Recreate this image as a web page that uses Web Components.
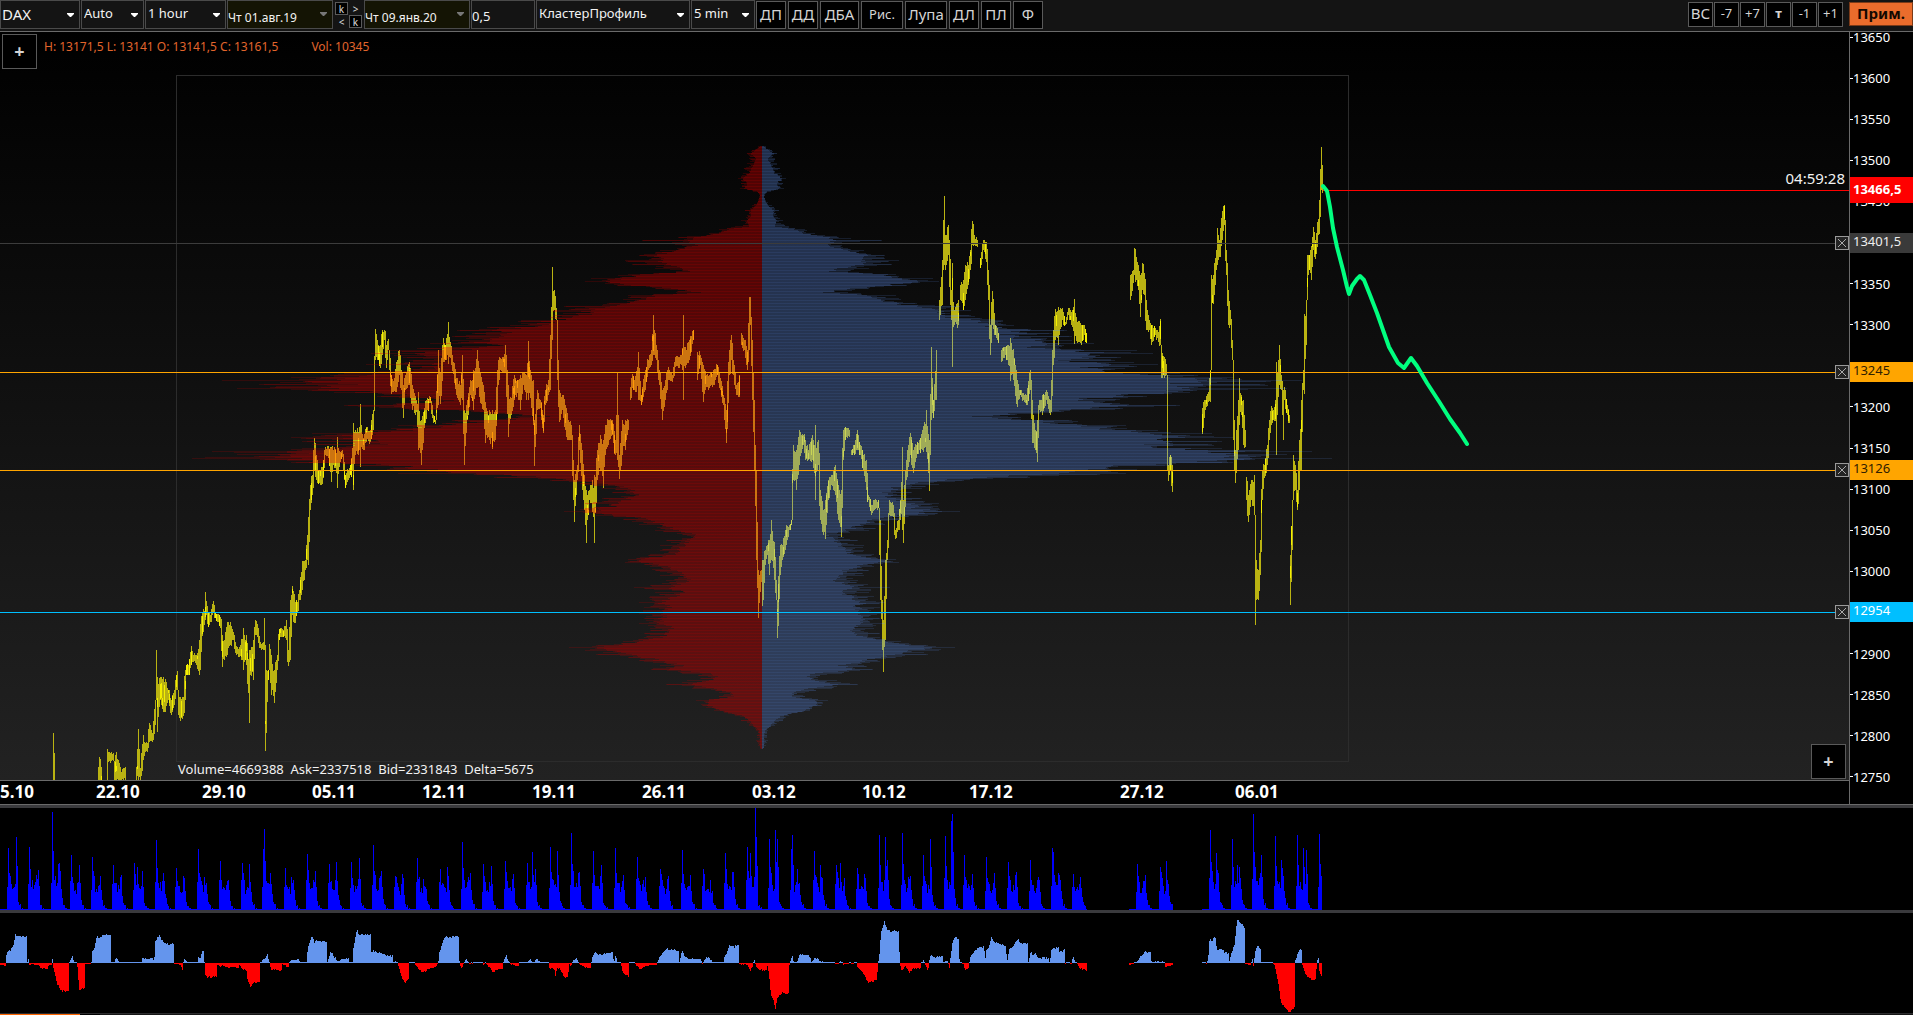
<!DOCTYPE html>
<html lang="ru">
<head>
<meta charset="utf-8">
<title>DAX</title>
<style>
html, body { margin: 0; height: 100%; background: #000; }
body { font-family: "Noto Sans", "Open Sans", sans-serif; color: #f2f2f2; overflow: hidden; }
</style>
</head>
<body>
<trading-app></trading-app>
<script>
/* Deterministic noise so that the series look the same on every load. */
function noise(seed) {
  let s = seed;
  return () => { s = (s * 1664525 + 1013904223) % 4294967296; return s / 4294967296; };
}
const nums = t => t.trim().split(/[\s,]+/).map(Number);
function define(name, html, setup) {
  const tpl = document.createElement('template');
  tpl.innerHTML = html;
  customElements.define(name, class extends HTMLElement {
    constructor() {
      super();
      this.attachShadow({ mode: 'open' }).append(tpl.content.cloneNode(true));
    }
    connectedCallback() { if (setup) setup.call(this, this.shadowRoot); }
  });
}

/* ---------- toolbar parts ---------- */
define('tool-select', `
<style>
:host { display: block; position: relative; width: var(--w); height: 29px; box-sizing: border-box; border: 1px solid #4a4a4a; background: #141414; }
:host([date]) { background: #141404; }
select { appearance: none; display: block; width: 100%; height: 100%; margin: 0; padding: 0 16px 4px 2px; border: 0; background: none; color: #f2f2f2; font: 13px "Noto Sans", sans-serif; outline: 0; }
:host([big]) select { font-size: 15px; padding-left: 1px; padding-bottom: 2px; }
:host([date]) select { font-size: 12px; padding: 5px 14px 0 0; }
svg { position: absolute; right: 5px; top: 12px; width: 7px; height: 5px; fill: #fff; pointer-events: none; }
:host([date]) svg { fill: #777; top: 11px; }
option { background: #141414; }
</style>
<select><option></option></select><svg viewBox="0 0 7 5"><path d="M0 0h7v1L4 4H3L0 1z"/></svg>`,
function (r) {
  r.querySelector('option').textContent = this.getAttribute('value');
  r.querySelector('select').setAttribute('aria-label', this.getAttribute('label'));
});

define('tool-button', `
<style>
:host { display: block; width: var(--w, 30px); height: var(--h, 28px); }
button { display: block; width: 100%; height: 100%; box-sizing: border-box; margin: 0; padding: 0 0 2px; border: 1px solid #5a5a5a; background: #000; color: #d4d4d4; font: var(--weight, 400) var(--size, 15px)/1 "Noto Sans", sans-serif; white-space: nowrap; }
:host([accent]) button { background: #ea6c2c; color: #140800; border-color: #7a3a18; }
:host([tiny]) button { padding: 0; border-color: #5a5a5a; color: #ddd; }
:host([bare]) button { padding: 0; border-color: transparent; background: none; color: #ddd; }
</style>
<button type="button"><slot></slot></button>`);

define('tool-bar', `
<style>
:host { display: flex; justify-content: space-between; height: 31px; background: #141414; border-bottom: 1px solid #6a6a6a; }
.group { display: flex; gap: 1px; align-items: flex-start; }
.buttons { gap: 2px; padding: 1px 0 0; }
.jump { display: grid; grid-template-columns: 13px 13px; grid-auto-rows: 13px; gap: 0 1px; padding: 2px 1px 0; --w: 13px; --h: 13px; --size: 10px; }
input { box-sizing: border-box; width: 64px; height: 29px; margin: 0; padding: 2px 0 0; border: 1px solid #4a4a4a; background: #141414; color: #f2f2f2; font: 13px "Noto Sans", sans-serif; outline: 0; }
.right { gap: 1px; padding-top: 2px; }
.right tool-button { --w: 25px; --h: 25px; --size: 13px; }
.right tool-button[accent] { --w: 64px; --h: 24px; --size: 15px; --weight: 700; margin-left: 5px; }
</style>
<div class="group">
  <tool-select big value="DAX" label="Инструмент" style="--w:80px"></tool-select>
  <tool-select value="Auto" label="Масштаб" style="--w:63px"></tool-select>
  <tool-select value="1 hour" label="Период" style="--w:81px"></tool-select>
  <tool-select date value="Чт 01.авг.19" label="Начало" style="--w:106px"></tool-select>
  <div class="jump"><tool-button tiny>k</tool-button><tool-button bare>&gt;</tool-button><tool-button bare>&lt;</tool-button><tool-button tiny>k</tool-button></div>
  <tool-select date value="Чт 09.янв.20" label="Конец" style="--w:106px"></tool-select>
  <input value="0,5" aria-label="Шаг">
  <tool-select value="КластерПрофиль" label="Тип графика" style="--w:154px"></tool-select>
  <tool-select value="5 min" label="Период кластера" style="--w:64px"></tool-select>
  <div class="group buttons">
    <tool-button>ДП</tool-button><tool-button>ДД</tool-button><tool-button style="--w:39px">ДБА</tool-button><tool-button style="--w:42px;--size:13px">Рис.</tool-button><tool-button style="--w:42px">Лупа</tool-button><tool-button>ДЛ</tool-button><tool-button>ПЛ</tool-button><tool-button>Ф</tool-button>
  </div>
</div>
<div class="group right">
  <tool-button style="--size:15px">ВС</tool-button><tool-button>-7</tool-button><tool-button>+7</tool-button><tool-button style="--weight:700">т</tool-button><tool-button>-1</tool-button><tool-button>+1</tool-button><tool-button accent>Прим.</tool-button>
</div>`);

/* ---------- price plot ---------- */
/* Triples: x, high, low. A zero triple breaks the line. */
const PRICE = nums(`53 733 780 54 753 780 0 0 0 98 767 780 99 757 780 101 767 780 0 0 0 107 749 780 108 752 762 113 753 761 114 765 780 116 752 780 118 760 780 121 772 780 125 767 780 0 0 0
136 767 780 138 729 780 140 768 780 143 735 760 145 743 752 147 743 752 149 723 742 152 733 742 155 700 725 156 650 700 157 677 732 160 677 700 163 677 712 165 679 712 168 690 700 171 700 715 174 690 705 176 675 690 177 671 690 178 695 715 180 697 721 183 697 716 185 670 700 186 665 675 188 665 675 191 646 665 193 655 662 196 655 665 199 640 675 200 624 670 202 612 636 204 611 625 205 592 620 206 601 615 208 612 627 210 615 622 213 601 612 215 613 618 220 617 628 222 635 667 224 640 660 227 622 655 230 622 645 233 632 640 236 646 655 239 647 657 243 628 670 246 635 665 249 650 723 250 650 675 253 640 680 255 620 635 257 624 637 260 642 648 263 642 650 264 618 650 265 645 751 266 670 733 268 670 680 269 644 670 271 655 695 274 670 703 277 655 670 279 629 640 283 630 637 286 620 640 288 650 666 290 600 660 292 586 615 295 602 623 297 602 612 299 590 600 302 561 590 305 560 570 308 517 565
310 485 510 312 475 495 314 438 470 316 455 480 318 470 484 322 467 484 325 447 455 328 446 458 331 447 482 333 450 465 337 437 488 340 452 462 342 450 457 345 475 488 348 470 480 350 465 475 353 423 490 355 430 455 358 432 455 360 404 467 363 438 450 366 427 442 370 430 442 373 410 430 375 329 360 378 345 360 380 345 368 382 330 355 384 330 340 386 345 368 388 339 350 389 355 370 391 375 394 394 378 391 396 362 392 399 350 375 401 370 390 403 385 418 405 375 390 409 362 385 412 385 410 416 400 412 418 392 450 421 420 465 424 408 428 427 398 410 430 397 403 433 415 423 435 420 424 438 350 405 440 372 404 443 338 362 445 345 360 448 322 364 450 342 358 453 362 374 456 378 395 460 385 405 462 355 400 464 410 465 467 400 420 470 380 395 473 370 410 477 350 388 480 372 403 483 385 410 485 402 443 489 410 440 492 410 449 495 410 440 498 360 385 500 358 370 503 357 373 505 345 372 508 385 437 511 398 415 514 375 400 517 380 393 520 375 410 523 373 385 526 375 400 528 341 400 531 375 408 533 380 425 534 420 466 537 390 410 540 400 408 543 415 433 545 390 405 548 380 395 550 335 390 552 267 340 554 290 310 556 308 320 557 340 380 559 390 422 562 395 410 565 405 430 568 420 440 571 425 440 573 460 500 574 480 522 577 465 480 579 425 450 582 450 490 586 490 543 589 490 500 592 480 512 594 475 543 597 450 480 600 435 470 603 440 488 605 425 455 609 420 440 612 420 435 615 440 455 617 373 460 619 455 479 622 420 455 625 420 450 628 420 430 0 0 0 630 387 400 632 374 388 634 380 390 638 352 400 641 395 405 644 375 392 648 360 370 651 350 365 653 315 355 656 345 360 659 370 385 662 390 420 665 380 400 668 367 380 672 375 382 675 357 367 678 357 368 681 355 365 683 315 400 686 350 365 689 340 360 693 330 340 0 0 0 697 352 380 700 355 365 703 365 402 706 375 387 709 375 388 713 370 385 717 365 375 720 378 390 723 395 405 726 410 443 729 350 375 731 335 360 733 360 375 736 385 395 739 375 397 0 0 0 741 333 345 744 340 350 747 350 370 749 297 350 750 297 325 752 340 400 754 400 470 756 470 560 758 570 618 761 570 582 762 560 606 763 560 600 765 550 565 767 545 555 769 540 575 771 520 560 774 542 580 776 580 600 777 600 638 780 545 575 782 545 560 785 530 550 789 525 530 791 520 525 793 445 480 796 450 490 799 430 465 803 435 445 805 440 460 808 450 460 812 435 460 815 425 500 818 440 465 820 490 520 823 510 535 825 500 539 828 480 500 831 475 485 835 465 495 838 485 520 841 490 537 843 430 460 845 427 440 849 430 437 0 0 0 851 450 455 854 445 455 857 430 450 860 445 455 863 455 470 866 460 490 868 495 500 871 505 515 874 500 510 878 500 508 880 520 600 882 600 650 883 620 672 885 560 640 887 540 560 889 500 515 893 505 517 895 530 539 898 520 530 900 500 520 902 447 530 903 500 543 906 460 480 910 433 455 913 450 473 916 445 458 919 440 450 922 430 450 926 410 452 929 440 491 931 347 420 933 400 418 936 350 400 0 0 0 939 300 320 942 260 305 943 220 270 944 196 265 945 235 270 948 225 255 951 290 320 952 263 367 954 310 325 958 300 325 0 0 0 960 285 300 963 280 310 965 265 300 968 265 285 970 250 270 972 221 245 974 235 245 977 240 247 0 0 0 980 258 268 983 240 250 986 242 262 988 270 300 990 325 355 992 291 325 995 325 335 998 333 343 0 0 0 1001 350 362 1005 347 355 1008 345 365 1010 338 381 1013 349 380 1017 380 407 1020 390 395 1023 393 400 1026 395 405 1030 370 390 1032 400 443 1035 430 450 1037 420 462 1039 400 410 1042 395 415 1046 390 400 1050 400 415 1051 380 412 1053 330 365 1055 309 340 1058 307 345 1062 308 320 1065 322 325 1068 308 315 1071 312 325 1074 299 344 1077 322 343 1081 325 345 1084 325 335 1086 333 343 0 0 0
1130 275 300 1133 270 283 1134 248 275 1138 265 290 1140 275 317 1142 263 290 1144 273 295 1146 300 330 1149 320 330 1151 325 345 1155 328 335 1158 332 342 1160 319 345 1161 345 378 1164 357 378 1166 364 375 1167 430 470 1168 465 481 1170 455 470 1172 465 492 0 0 0
1202 408 434 1205 400 410 1208 392 402 1210 370 402 1211 275 315 1213 275 304 1216 250 270 1217 228 265 1219 240 257 1222 211 240 1224 205 225 1226 250 275 1228 290 325 1230 310 325 1232 340 360 1233 410 440 1235 450 483 1238 400 450 1239 378 425 1241 395 415 1243 400 445 1245 430 447 0 0 0 1246 477 500 1248 495 522 1251 480 500 1254 475 515 1255 520 625 1256 560 600 1258 570 600 1260 540 575 1262 470 500 1264 465 478 1267 445 465 1269 420 440 1271 406 425 1273 410 420 1276 362 455 1279 345 385 1281 375 390 1283 390 440 1284 387 400 1287 405 415 1289 415 423 0 0 0 1290 555 605 1292 500 550 1293 455 490 1295 465 490 1297 490 510 1299 440 490 1301 400 470 1303 370 390 1304 314 394 1306 300 345 1307 255 280 1309 255 270 1311 246 280 1313 227 250 1315 240 259 1318 219 235 1319 200 234 1321 147 190 1322 165 193`);

/* Triples: y, solid width, faint width of the volume-at-price rows. */
const PROFILE = nums(`146 2 4 150 7 10 153 12 15 158 6 13 163 8 15 168 11 18 173 13 19 178 20 24 183 15 21 188 18 22 191 5 9 194 2 3 200 3 4 205 6 10 210 12 17 215 11 15 220 15 21 226 13 27 229 34 43 233 43 53 236 66 75 240 75 120 245 66 80 250 91 102 255 107 123 260 104 137 264 102 130 268 80 107 271 70 86 274 123 134 278 145 171 281 160 177 285 128 145 288 91 107 292 64 86 295 107 134 299 118 139 303 137 155 306 160 198 310 177 209 315 184 209 320 214 241 325 230 252 330 268 305 333 257 290 336 252 310 340 278 310 343 290 332 346 268 300 350 320 375 353 343 391 357 321 359 360 310 353 364 343 396 369 332 353 373 375 418 377 439 471 380 450 540 384 428 503 388 450 525 392 407 428 396 353 385 400 310 353 405 375 418 409 321 353 413 257 278 416 214 246 420 278 310 425 321 364 430 364 396 433 407 450 437 418 471 441 407 460 444 396 450 448 418 460 451 471 550 454 492 525 458 482 570 462 450 471 465 375 407 469 343 375 473 290 364 477 225 268 481 171 193 484 150 177 488 134 160 492 128 150 498 134 160 503 150 177 508 160 177 511 177 198 515 145 166 519 112 139 524 102 123 530 86 107 534 64 80 540 75 96 545 80 102 550 86 102 554 91 112 559 123 134 562 118 137 566 96 112 570 86 107 575 80 102 580 75 96 587 96 128 592 80 107 596 91 112 602 102 123 607 96 118 613 102 123 618 102 118 623 102 123 628 91 112 633 96 118 637 102 118 641 128 139 645 150 166 647 171 193 650 155 177 654 139 166 657 118 134 661 102 118 665 80 102 669 96 111 673 54 80 676 45 54 680 54 75 684 75 96 688 48 70 692 32 43 696 30 43 700 54 66 705 54 60 710 43 48 715 21 27 720 13 21 725 9 13 730 3 6 735 2 5 740 2 6 745 2 4 749 1 3`);
const AXIS = 762;

function candles() {
  const rnd = noise(7);
  let body = '', bright = '', last = null;
  const put = (x, a, b) => {
    /* Each bar touches the one before it. */
    if (last) {
      if (a > last[1]) a = last[1];
      if (b < last[0]) b = last[0];
    }
    a = Math.round(a); b = Math.min(780, Math.max(a + 2, Math.round(b)));
    last = [a, b];
    body += `M${x} ${a}h1V${b}h-1z`;
    if (rnd() < .2) {
      const n = Math.min(b - a, 3 + rnd() * 16), s = Math.round(a + (b - a - n) * rnd());
      bright += `M${x} ${s}h1v${Math.round(n)}h-1z`;
    }
  };
  for (let i = 0; i < PRICE.length; i += 3) {
    const [x, a, b, x2, a2, b2] = PRICE.slice(i, i + 6);
    if (!x) { last = null; continue; }
    put(x, a, b);
    if (!x2) continue;
    const m = (a + b) / 2, m2 = (a2 + b2) / 2;
    const h = Math.min((b - a) / 2, 14), h2 = Math.min((b2 - a2) / 2, 14);
    for (let c = x + 1; c < x2; c++) {
      const t = (c - x) / (x2 - x);
      const mid = m + (m2 - m) * t + (rnd() - .5) * 4;
      const half = (h + (h2 - h) * t) * (.7 + rnd() * .4) + Math.abs(m2 - m) / (x2 - x) / 2;
      put(c, mid - half, mid + half);
    }
  }
  return { body, bright };
}

function profile(side, seed) {
  const rnd = noise(seed);
  let solid = '', faint = '', lines = '';
  const row = (y, w) => `M${AXIS} ${y}h${side * Math.round(w)}v1h${-side * Math.round(w)}z`;
  for (let i = 0; i + 3 < PROFILE.length; i += 3) {
    const [y, a, b, y2, a2, b2] = PROFILE.slice(i, i + 6);
    for (let r = y; r < y2; r++) {
      const t = (r - y) / (y2 - y), p = a + (a2 - a) * t, q = b + (b2 - b) * t;
      const w = p * (.93 + rnd() * .1), f = r === y ? q : w + (q - p) * rnd();
      solid += row(r, w);
      faint += row(r, Math.max(w, f));
      if (r % 3 === 0) lines += row(r, Math.max(w, f) * .99);
    }
  }
  return { solid, faint, lines };
}

define('price-chart', `
<style>
:host { display: grid; grid-template: minmax(0, 1fr) / minmax(0, 1fr); position: relative; overflow: hidden; background: linear-gradient(#000, #222); border-bottom: 1px solid #6a6a6a; }
svg.plot { width: 100%; height: 100%; display: block; grid-area: 1/1; }
.over { grid-area: 1/1; position: relative; display: flex; flex-direction: column; justify-content: space-between; padding: 2px 3px 1px 2px; }
.head, .foot { display: flex; align-items: flex-start; }
.head { gap: 7px; color: #e2652c; font-size: 12px; line-height: 26px; }
.head .vol { margin-left: 26px; }
.foot { justify-content: space-between; align-items: flex-end; }
.foot .sum { margin-left: 176px; font-size: 13px; line-height: 20px; white-space: pre; }
tool-button { --w: 35px; --h: 35px; --size: 18px; --weight: 700; }
.timer { position: absolute; right: 4px; top: 136px; font-size: 15px; line-height: 20px; }
.close { position: absolute; right: 0; top: var(--y); width: 14px; height: 14px; padding: 0; border: 1px solid #999; background: #242424; display: grid; place-items: center; }
.close svg { width: 8px; height: 8px; stroke: #aaa; }
</style>
<svg class="plot" viewBox="0 32 1849 748" preserveAspectRatio="none" shape-rendering="crispEdges">
  <defs><clipPath id="cr"><path class="rf"/></clipPath><clipPath id="cb"><path class="bf"/></clipPath></defs>
  <rect x="176.5" y="75.5" width="1172" height="686" fill="none" stroke="#2c2c2c"/>
  <g fill="#bab312"><path class="cn"/></g><path class="cx" fill="#f4f000"/>
  <g fill="rgb(190,0,0)"><path class="rf" fill-opacity=".2"/><path class="rs" fill-opacity=".25"/><path class="rl" fill-opacity=".2"/></g>
  <g fill="rgb(76,110,182)"><path class="bf" fill-opacity=".2"/><path class="bs" fill-opacity=".25"/><path class="bl" fill-opacity=".16"/></g>
  <g clip-path="url(#cr)"><path class="cn" fill="#cc7410"/><path class="cx" fill="#ff9a08"/></g>
  <g clip-path="url(#cb)"><path class="cn" fill="#9fab58"/><path class="cx" fill="#c9d456"/></g>
  <path d="M0 243h1849v1H0z" fill="#3c3c3c"/>
  <path d="M0 372h1849v1H0zM0 470h1849v1H0z" fill="#ffa500"/>
  <path d="M0 612h1849v1H0z" fill="#00bfff"/>
  <path d="M1323 190h526v1h-526z" fill="#f00"/>
  <path d="M1323 186L1327 191 1330 207 1333 228 1337 247 1343 270 1347 287 1349 294 1352 286 1357 279 1360 276 1364 280 1370 295 1377 313 1383 330 1389 347 1398 363 1404 368 1411 358 1417 366 1427 383 1440 403 1450 419 1460 433 1467 444" fill="none" stroke="#00ff7f" stroke-width="4" stroke-linejoin="round" stroke-linecap="round" shape-rendering="auto"/>
</svg>
<div class="over">
  <div class="head"><tool-button>+</tool-button><span>H: 13171,5 L: 13141 O: 13141,5 C: 13161,5</span><span class="vol">Vol: 10345</span></div>
  <div class="foot"><span class="sum">Volume=4669388  Ask=2337518  Bid=2331843  Delta=5675</span><tool-button>+</tool-button></div>
  <span class="timer">04:59:28</span>
</div>`,
function (r) {
  const c = candles(), red = profile(-1, 21), blue = profile(1, 94);
  const d = { cn: c.body, cx: c.bright, rf: red.faint, rs: red.solid, rl: red.lines, bf: blue.faint, bs: blue.solid, bl: blue.lines };
  for (const k in d) r.querySelectorAll('.' + k).forEach(p => p.setAttribute('d', d[k]));
  for (const y of [204, 333, 431, 573]) {
    const b = document.createElement('button');
    b.className = 'close';
    b.type = 'button';
    b.setAttribute('aria-label', 'Удалить уровень');
    b.style.setProperty('--y', y + 'px');
    b.innerHTML = '<svg viewBox="0 0 8 8"><path d="M0 0l8 8M8 0L0 8"/></svg>';
    r.querySelector('.over').append(b);
  }
});

/* ---------- scales ---------- */
define('price-tag', `
<style>
:host { display: block; position: absolute; left: 0; right: 0; top: var(--y); height: 20px; line-height: 16px; padding-left: 3px; box-sizing: border-box; font-size: 13px; }
:host([live]) { height: 26px; line-height: 24px; font-weight: 700; }
</style><slot></slot>`);
define('price-scale', `
<style>
:host { display: block; position: relative; overflow: hidden; border-left: 1px solid #6a6a6a; background: #000; }
ol { list-style: none; margin: 0; padding: 0 0 22px; height: 100%; box-sizing: border-box; display: flex; flex-direction: column; justify-content: space-between; }
li { display: flex; align-items: center; height: 10px; font-size: 13px; line-height: 10px; color: #fff; }
li::before { content: ""; width: 3px; height: 1px; background: #fff; }
</style>
<ol></ol>
<price-tag live style="--y:145px;background:#f00;color:#fff">13466,5</price-tag>
<price-tag style="--y:201px;background:#3a3a3a;color:#eee">13401,5</price-tag>
<price-tag style="--y:330px;background:#ffa500;color:#302000">13245</price-tag>
<price-tag style="--y:428px;background:#ffa500;color:#302000">13126</price-tag>
<price-tag style="--y:570px;background:#00bfff;color:#fff">12954</price-tag>`,
function (r) {
  /* Ticks that lie wholly under a level's tag carry no text. */
  const covered = [13400, 12950];
  for (let p = 13650; p >= 12750; p -= 50) {
    const li = document.createElement('li');
    if (!covered.includes(p)) li.textContent = p;
    r.querySelector('ol').append(li);
  }
});
define('time-scale', `
<style>
:host { display: grid; grid-template-columns: 96fr 106fr 110fr 110fr 110fr 110fr 110fr 110fr 107fr 151fr 115fr 614fr; height: 23px; background: #000; font-size: 17px; line-height: 21px; font-weight: 700; color: #fff; overflow: hidden; }
span { min-width: 0; }
</style>
<span>5.10</span><span>22.10</span><span>29.10</span><span>05.11</span><span>12.11</span><span>19.11</span><span>26.11</span><span>03.12</span><span>10.12</span><span>17.12</span><span>27.12</span><span>06.01</span>`);

/* ---------- indicator panels ---------- */
/* Pairs: x, height of the session peaks; the first of a session is followed by its afternoon peaks. */
const SESSIONS = `8 62 16 73|29 63 38 40|52 98 58 46|71 55 79 45|92 53 100 34|113 45 120 33|134 47 137 43 142 39|156 70 163 37|176 42 184 32|198 61 204 33|220 49 228 30|242 47 249 46|263 61 264 81 270 37|285 42 291 33|307 56 315 39|329 46 336 48|351 48 359 52|373 65 381 39|395 34 402 36|417 52 424 24|440 41 447 43|462 68 469 30|483 46 491 44|505 49 513 36|527 47 532 58 535 41|550 63 557 59|571 77 578 37|593 59 601 45|615 62 622 29|637 53 644 23|660 41 667 31|682 60 689 24|703 41 711 17|725 57 733 38|747 63 750 57 755 102 756 73|769 71 775 80 777 71|791 61 792 75 797 41|814 59 820 45|836 45 840 47|857 42 865 32|879 75 885 73 887 50|902 77 908 33|923 55 930 71|945 74 951 89 952 96|964 55 972 36|986 53 994 37|1008 48 1016 38|1030 50 1039 30|1052 62 1053 58 1058 37|1073 36 1081 22|1137 46 1144 29|1160 43 1166 49|1210 80 1216 57|1232 71 1237 45|1253 96 1261 55|1275 74 1281 50|1297 75 1303 62 1306 60|1319 76`.split('|').map(nums);
const svgPanel = (h, inner) => `<style>:host{display:block;background:#000}svg{display:block;width:100%;height:${h}px}</style><svg viewBox="0 0 1913 ${h}" preserveAspectRatio="none" shape-rendering="crispEdges">${inner}</svg>`;
const traded = x => x < 1087 || (x >= 1129 && x < 1173) || (x >= 1202 && x < 1322);

define('volume-panel', svgPanel(102, '<path fill="#00f"/>'), function (r) {
  const rnd = noise(5), h = new Array(1322).fill(1);
  for (const s of SESSIONS) {
    const x0 = s[0], base = 17 + s[1] * .15;
    const shape = [1, 1.4, 1.3, 1.1, .9, .85, .85, 1, 1.25, 1.2, .7, .35, .2, .2, .06, .08];
    shape.forEach((k, i) => { const x = x0 - 1 + i; if (x < 1322) h[x] = Math.max(1, base * k * (.75 + rnd() * .5)); });
    for (let i = 0; i < s.length; i += 2) {
      h[s[i]] = s[i + 1];
      if (s[i] + 1 < 1322 && h[s[i] + 1] < s[i + 1] * .6) h[s[i] + 1] = s[i + 1] * .6;
    }
  }
  let d = '';
  h.forEach((v, x) => { if (traded(x)) d += `M${x} 102v${-Math.round(v)}h1V102z`; });
  r.querySelector('path').setAttribute('d', d);
});

/* Pairs: sample, value. The two halves are sampled at different densities. */
const DELTA = [
  [0, 2.45, nums(`0 -2 14 -3 16 8 20 13 25 12 33 17 38 28 66 26 67 0 70 4 72 -2 80 -1 95 -2 100 -5 118 -6 119 -2 127 -2 128 8 130 -3 135 -12 140 -20 145 -25 152 -28 168 -28 169 0 173 3 178 7 182 1 189 1 190 -5 194 -27 207 -25 208 -1 224 -1 226 12 232 15 238 27 243 25 255 28 271 28 272 1 282 1 284 7 290 2 300 1 348 1 349 5 360 4 375 5 378 1 380 20 385 25 391 29 397 22 405 19 426 19 427 -1 442 -2 447 -6 449 0 452 4 460 1 485 1 487 8 490 3 496 12 500 13 502 -10 505 -14 531 -14 532 -1 540 -4 545 -2 560 -5 585 -4 587 -1 594 -6 603 -6 607 -17 615 -24 620 -20 637 -20 638 0 645 4 650 4 655 9 660 2 664 -7 690 -7 691 -1 700 -2 703 -5 707 -3 710 2 720 3 732 4 735 1 752 1 754 15 760 23 765 28 770 20 775 23 800 21 802 1 806 5 810 12 820 6 826 2 840 4 855 5 856 0 864 1 866 15 870 25 876 34 880 27 890 29 908 28 910 10 915 13 925 10 935 10 945 8 963 7 964 0 968 2 975 -1 980 -8 985 -15 993 -20 1001 -15 1002 1 1015 0 1022 -4 1030 -8 1040 -9 1055 -5 1070 -4 1072 -1 1075 2 1077 12 1085 20 1093 28 1100 26 1124 27 1126 -2 1132 -6 1136 0 1143 4 1150 -1 1180 1 1184 -2 1190 0 1200 -5 1210 -10 1220 -6 1231 -6 1233 1 1238 5 1241 9 1245 2 1250 -1 1270 -3 1272 1 1292 1 1300 4 1306 -1 1314 5 1325 1 1343 1 1346 -5 1358 -6 1361 -13 1365 -5 1373 -6 1380 -13 1392 -15 1394 0 1398 -3 1405 3 1412 5 1420 -1 1430 -4 1447 -5 1449 0 1453 8 1460 11 1470 8 1480 10 1502 11 1504 0 1509 8 1512 1 1520 1 1525 -7 1530 -11 1540 -13 1542 1 1555 1 1560 -3 1568 -6`)],
  [640, 2.24, nums(`0 -6 10 -4 22 -2 38 -2 40 1 44 6 50 10 60 14 75 13 87 12 88 -1 92 8 95 12 100 7 108 5 120 4 136 4 140 -1 143 2 150 6 158 4 162 1 180 1 187 0 190 8 195 10 200 18 210 16 221 18 223 -1 240 -2 248 -8 253 -2 257 4 260 -4 270 -7 282 -8 286 -3 289 -10 293 -30 298 -35 303 -47 308 -35 318 -30 333 -30 335 -1 341 7 344 1 352 1 358 9 370 8 382 6 384 1 390 4 396 5 402 2 415 1 435 1 437 -1 446 -1 450 3 455 -2 465 -1 485 0 487 -4 495 -7 503 -12 510 -19 520 -18 531 -18 533 0 536 5 540 30 548 42 555 32 580 32 582 0 586 -8 595 -3 604 -10 612 -6 628 -6 630 0 635 3 640 -2 645 -8 650 8 660 6 678 7 680 1 690 2 693 -5 697 10 700 20 705 26 714 24 716 1 724 -1 730 -8 737 -3 740 5 745 10 758 15 771 16 773 0 776 14 782 16 787 26 795 21 805 19 820 18 822 0 828 15 835 16 842 22 848 23 855 20 868 19 870 1 876 12 881 7 886 11 890 5 900 5 915 5 918 0 922 14 930 14 937 16 940 11 951 13 953 -1 960 1 966 -2 970 7 975 1 981 -2 985 -6 995 -6 1001 -9 1095 -2 1105 -1 1113 1 1120 5 1130 11 1144 11 1146 0 1160 2 1175 1 1177 -4 1193 -2 1257 1 1270 -1 1274 10 1276 24 1282 22 1288 27 1293 12 1304 15 1310 10 1318 10 1320 1 1325 10 1332 18 1338 44 1345 40 1354 37 1356 -1 1368 -2 1372 4 1374 -4 1378 10 1384 18 1390 14 1392 0 1400 1 1415 1 1422 -2 1425 -10 1430 -20 1436 -40 1445 -45 1453 -49 1466 -45 1468 2 1475 12 1482 14 1484 -2 1490 -10 1500 -16 1514 -17 1516 1 1520 5 1522 -8 1530 -18`)]
];
define('delta-panel', svgPanel(100, '<path class="up" fill="#6495ed"/><path class="down" fill="#f00"/>'), function (r) {
  const rnd = noise(3);
  let up = '', down = '';
  for (const [x0, k, s] of DELTA) {
    const end = Math.min(1322, Math.round(x0 + s[s.length - 2] / k));
    let i = 0;
    for (let x = x0; x < end; x++) {
      const p = (x - x0 + .5) * k;
      while (i + 4 < s.length && s[i + 2] < p) i += 2;
      if (!traded(x)) continue;
      const t = Math.min(1, (p - s[i]) / (s[i + 2] - s[i]));
      let v = Math.round(s[i + 1] + (s[i + 3] - s[i + 1]) * t + (rnd() - .5) * (Math.abs(s[i + 1]) > 4 ? 2 : .8));
      if (v >= 0) up += `M${x} 50v${-Math.max(1, v)}h1V50z`;
      else down += `M${x} 50v${-v}h1V50z`;
    }
  }
  r.querySelector('.up').setAttribute('d', up);
  r.querySelector('.down').setAttribute('d', down);
});

define('trading-app', `
<style>
:host { display: flex; flex-direction: column; height: 100vh; background: #000; }
main { flex: 1; min-height: 0; display: grid; grid-template: minmax(0, 1fr) auto / minmax(0, 1fr) 64px; }
price-scale { grid-row: 1 / 3; grid-column: 2; }
price-chart, time-scale { grid-column: 1; }
hr { margin: 0; border: 0; height: 3px; background: #3a3a3d; }
hr.edge { border-top: 1px solid #6a6a6a; }
footer { height: 1px; border-top: 1px solid #2c2c2e; background: linear-gradient(90deg, #f60 80px, #000 80px, #000 100px, #161616 100px); }
</style>
<tool-bar></tool-bar>
<main><price-chart></price-chart><price-scale></price-scale><time-scale></time-scale></main>
<hr class="edge"><volume-panel></volume-panel><hr><delta-panel></delta-panel><footer></footer>`);
</script>
</body>
</html>
